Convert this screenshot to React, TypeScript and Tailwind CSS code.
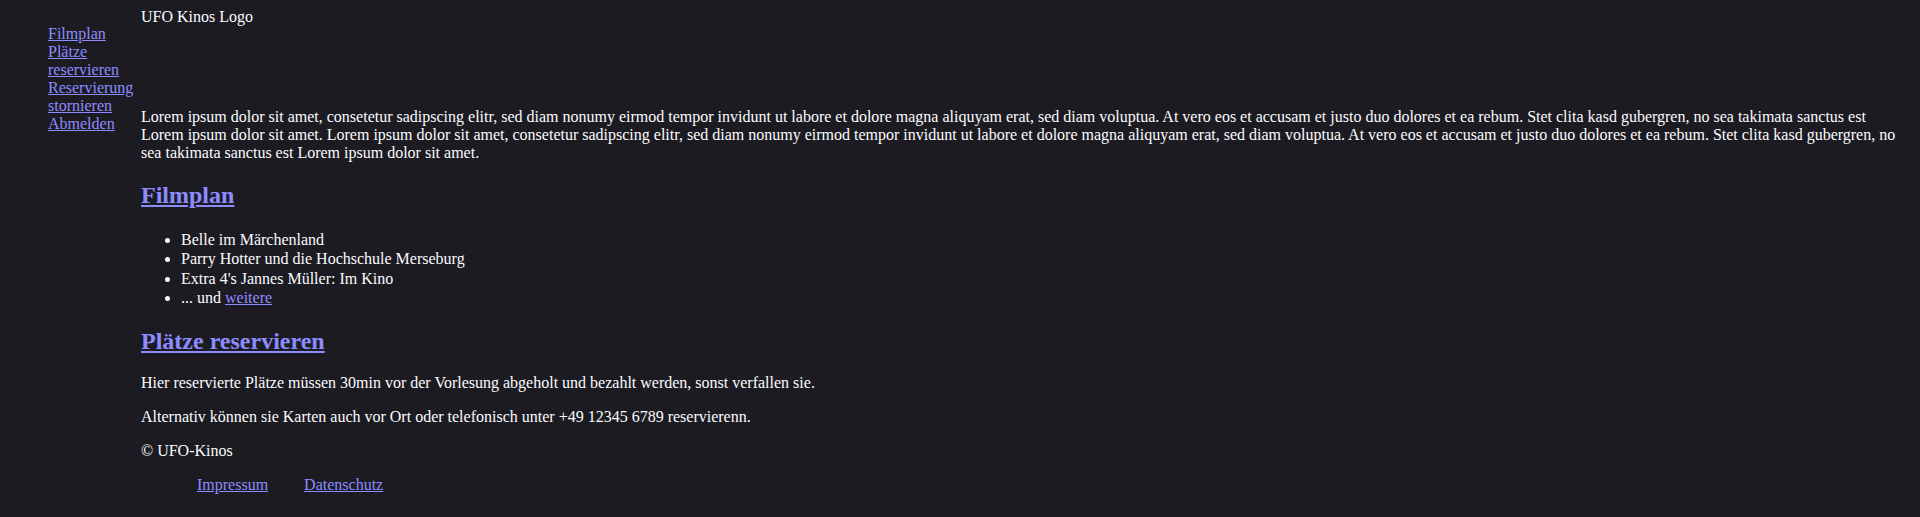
export default function App() {
  const navLinks = ['Filmplan', 'Plätze reservieren', 'Reservierung stornieren', 'Abmelden']
  const films = ['Belle im Märchenland', 'Parry Hotter und die Hochschule Merseburg', "Extra 4's Jannes Müller: Im Kino"]
  const lorem =
    'Lorem ipsum dolor sit amet, consetetur sadipscing elitr, sed diam nonumy eirmod tempor invidunt ut labore et dolore magna aliquyam erat, sed diam voluptua. At vero eos et accusam et justo duo dolores et ea rebum. Stet clita kasd gubergren, no sea takimata sanctus est Lorem ipsum dolor sit amet.'

  return (
    <div className="min-h-[517px] bg-[#1c1b22] p-2 font-['Liberation_Serif',serif] text-base leading-[18px] text-[#fbfbfe]">
      <div className="flex gap-2">
        <ul className="mt-[17px] w-[125px] shrink-0 list-none pl-10">
          {navLinks.map((l) => (
            <li key={l}>
              <a href="#" className="text-[#8c8cff] underline">
                {l}
              </a>
            </li>
          ))}
        </ul>

        <main className="min-w-0 flex-1">
          <div className="h-[84px]">UFO Kinos Logo</div>

          <p className="mt-4">
            {lorem} {lorem}
          </p>

          <h2 className="mt-5 text-2xl leading-[26.6px] font-bold">
            <a href="#" className="text-[#8c8cff] underline">
              Filmplan
            </a>
          </h2>
          <ul className="mt-[21px] list-disc pl-10 leading-[19.5px]">
            {films.map((f) => (
              <li key={f}>{f}</li>
            ))}
            <li>
              ... und{' '}
              <a href="#" className="text-[#8c8cff] underline">
                weitere
              </a>
            </li>
          </ul>

          <h2 className="mt-5 text-2xl leading-[26.6px] font-bold">
            <a href="#" className="text-[#8c8cff] underline">
              Plätze reservieren
            </a>
          </h2>
          <p className="mt-5">
            Hier reservierte Plätze müssen 30min vor der Vorlesung abgeholt und bezahlt werden, sonst verfallen sie.
          </p>
          <p className="mt-4">
            Alternativ können sie Karten auch vor Ort oder telefonisch unter +49 12345 6789 reservierenn.
          </p>

          <footer className="mt-4">
            <p>© UFO-Kinos</p>
            <div className="mt-4 flex gap-9 pl-14">
              <a href="#" className="text-[#8c8cff] underline">
                Impressum
              </a>
              <a href="#" className="text-[#8c8cff] underline">
                Datenschutz
              </a>
            </div>
          </footer>
        </main>
      </div>
    </div>
  )
}
